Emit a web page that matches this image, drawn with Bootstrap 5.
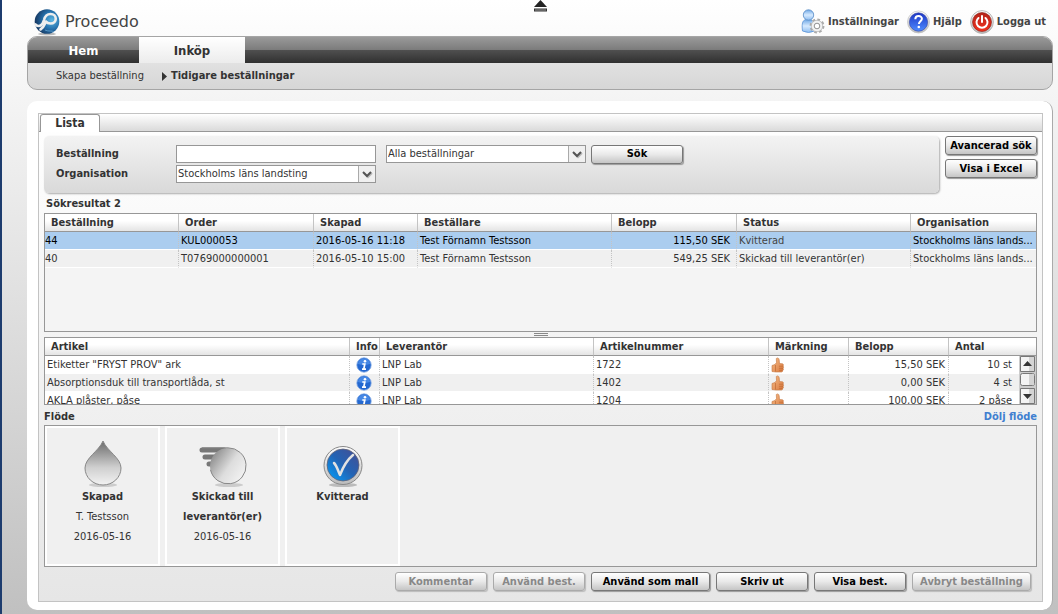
<!DOCTYPE html>
<html lang="sv">
<head>
<meta charset="utf-8">
<meta name="viewport" content="width=device-width, initial-scale=1">
<title>Proceedo – Tidigare beställningar</title>
<link href="https://cdn.jsdelivr.net/npm/bootstrap@5.3.0/dist/css/bootstrap.min.css" rel="stylesheet">
<style>
  body { font-family: "DejaVu Sans Condensed", "Noto Sans", sans-serif; font-size: 11px; line-height: 18px; color: #333; background: linear-gradient(#fff, #f4f4f4 100px, #c0c0c0) no-repeat #c0c0c0; min-height: 100vh; }
  b, th { font-weight: 700; }
  .app-shell { border-left: 2px solid #1d3c6e; padding: 0 5px 5px 25px; min-height: 100vh; }
  .top-line { height: 36px; padding: 7px 7px 0 6px; }
  .brand-word { font-family: "DejaVu Sans", sans-serif; font-size: 16px; color: #444; }
  .tool-link { color: #444; font-weight: 700; text-decoration: none; font-size: 11px; gap: 3px; }
  .eject { left: 50%; top: 0; margin-left: 3px; }
  .main-nav { border: 1px solid #a5a5a5; border-radius: 10px; overflow: hidden; background: linear-gradient(#ececec, #d6d6d6); height: 54px; }
  .nav-strip { height: 26px; background: linear-gradient(#9a9a9a, #7b7b7b 50%, #505050 50%, #303030); }
  .nav-strip a { width: 111px; font-size: 13px; font-weight: 700; color: #fff; text-decoration: none; line-height: 28px; text-align: center; }
  .nav-strip a.current { width: 106px; color: #333; background: linear-gradient(#fff, #ececec); }
  .sub-nav { height: 26px; line-height: 26px; padding-left: 28px; gap: 18px; }
  .sub-nav a { color: #333; text-decoration: none; }
  .sheet { margin-top: 11px; background: #fff; border-radius: 10px; border-right: 1px solid #aaa; padding: 12px 9px 8px 11px; }
  .frame { border: 1px solid #c3c3c3; background: linear-gradient(#fff, #e6e6e6); }
  .tab-strip { height: 18px; border-bottom: 1px solid #979797; background: linear-gradient(#fff, #dadada); }
  .tab-strip a { width: 60px; height: 18px; margin-left: 1px; border: 1px solid #979797; border-bottom: 0; border-radius: 3px 3px 0 0; background: #fff; text-align: center; font-size: 12px; font-weight: 700; color: #333; text-decoration: none; line-height: 17px; }
  .frame-body { padding: 4px 5px 10px 5px; }
  .search-panel { height: 57px; margin-right: 6px; padding: 9px 12px; gap: 2px; border-radius: 5px; background: linear-gradient(#f3f3f3, #d9d9d9); box-shadow: 1px 1px 2px #aaa; }
  .search-panel label { width: 120px; line-height: 18px; font-weight: 700; }
  .filter-row { height: 18px; }
  .scope-field { padding-left: 10px; padding-right: 5px; }
  .field { display: block; appearance: none; width: 200px; height: 18px; border: 1px solid #979797; border-radius: 0; background-color: #fff; padding: 0 1px; font-size: 11px; line-height: 16px; color: #333; }
  select.field { background: url("data:image/svg+xml,%3Csvg xmlns='http://www.w3.org/2000/svg' width='17' height='16'%3E%3Cpath d='M0 0h17v16H0z' fill='%23f0f0f0'/%3E%3Cpath d='M.5 0v16' stroke='%23aaa'/%3E%3Cpath d='M6 7l4 4 4-4' fill='none' stroke='%23bbb' stroke-width='2'/%3E%3Cpath d='M5 6l4 4 4-4' fill='none' stroke='%23555' stroke-width='2'/%3E%3C/svg%3E") right center no-repeat #fff; }
  .push { height: 19px; min-width: 92px; padding: 0 4px; border: 1px solid #777; border-radius: 3px; background: linear-gradient(#fff, #e9e9e9 50%, #c5c5c5); box-shadow: 1px 1px 1px #999; color: #000; font-size: 11px; font-weight: 700; line-height: 16px; white-space: nowrap; }
  .push:disabled { color: #888; border-color: #aaa; box-shadow: 1px 1px 1px #bbb; }
  .section-head { height: 20px; line-height: 22px; padding-left: 2px; }
  .flow-head { padding-left: 0; line-height: 24px; }
  .hide-flow { color: #3f7fd0; text-decoration: none; }
  .grid-box { border: 1px solid #979797; background: #f4f4f4; overflow: hidden; }
  .orders-box { height: 119px; }
  .lines-box { height: 68px; }
  .grid { width: 100%; table-layout: fixed; border-collapse: separate; border-spacing: 0; }
  .grid th { height: 18px; padding: 0 0 0 6px; line-height: 17px; background: linear-gradient(#fff 40%, #e4e4e4); border-bottom: 1px solid #979797; border-left: 1px solid #c4c4c4; white-space: nowrap; }
  .grid td { height: 18px; padding: 0 6px 0 2px; line-height: 17px; border-left: 1px dotted #c4c4c4; border-bottom: 1px solid #fff; white-space: nowrap; }
  .grid th:first-child, .grid td:first-child { border-left: 0; }
  .orders td:first-child { padding-left: 0; }
  .orders td { background: #f0f0f0; }
  .orders td:last-child { padding-right: 0; }
  .orders .picked td { background: #abcdef; color: #000; }
  .orders .picked td.faded { color: #444; }
  .lines tbody tr:nth-child(odd) td { background: #fff; }
  .lines tbody tr:nth-child(even) td { background: #f0f0f0; }
  .lines td:nth-child(6) { padding-right: 3px; }
  .lines td:last-child { padding-right: 24px; }
  .lines .icon-cell { padding: 0 0 0 6px; }
  .lines svg { display: block; }
  .splitter { height: 5px; }
  .splitter i { width: 14px; height: 3px; border-top: 1px solid #888; border-bottom: 1px solid #888; }
  .scroller { right: 0; top: 18px; width: 17px; height: 49px; }
  .flow-box { border: 1px solid #979797; background: #f0f0f0; height: 142px; gap: 5px; }
  .step { width: 115px; border: 2px solid #fff; padding-top: 10px; text-align: center; line-height: 20px; }
  .step svg { display: block; margin: 0 auto; }
  .foot-actions { margin: 5px 6px 0 0; gap: 6px; }
  .foot-actions .wide { width: 119px; }
</style>
</head>
<body>
<svg width="0" height="0" class="position-absolute" aria-hidden="true">
  <defs>
    <linearGradient id="grey" x1="0" y1="0" x2="0" y2="1"><stop offset="0" stop-color="#6b6b6b"/><stop offset=".6" stop-color="#cfcfcf"/><stop offset="1" stop-color="#f2f2f2"/></linearGradient>
    <linearGradient id="greyball" x1="0" y1="0" x2="1" y2=".7"><stop offset="0" stop-color="#777"/><stop offset=".6" stop-color="#ddd"/><stop offset="1" stop-color="#f2f2f2"/></linearGradient>
    <linearGradient id="bluetick" x1="1" y1="0" x2="0" y2="1"><stop offset="0" stop-color="#474d91"/><stop offset=".5" stop-color="#2363b4"/><stop offset="1" stop-color="#00a2ff"/></linearGradient>
    <radialGradient id="orb" cx=".7" cy=".45" r=".7"><stop offset="0" stop-color="#5db8e4"/><stop offset=".5" stop-color="#2672ad"/><stop offset="1" stop-color="#16365f"/></radialGradient>
    <linearGradient id="helpblue" x1="0" y1="0" x2="0" y2="1"><stop offset="0" stop-color="#1c35c4"/><stop offset="1" stop-color="#4d8bff"/></linearGradient>
    <linearGradient id="offred" x1="0" y1="0" x2="0" y2="1"><stop offset="0" stop-color="#b3241a"/><stop offset="1" stop-color="#f2301c"/></linearGradient>
    <linearGradient id="rim" x1="0" y1="0" x2="0" y2="1"><stop offset="0" stop-color="#fff"/><stop offset="1" stop-color="#bbb"/></linearGradient>
    <linearGradient id="person" x1="0" y1="0" x2="0" y2="1"><stop offset="0" stop-color="#6fa8e6"/><stop offset=".5" stop-color="#d6eaff"/><stop offset="1" stop-color="#8cbcf0"/></linearGradient>
    <linearGradient id="skin" x1="0" y1="0" x2="1" y2="1"><stop offset="0" stop-color="#f5bd8a"/><stop offset="1" stop-color="#d9783c"/></linearGradient>
    <symbol id="info" viewBox="0 0 16 16"><circle cx="8" cy="8" r="7.200" fill="#2468d0" stroke="#7fa8e4" stroke-width=".8"/><path d="M2 7a6 5.500 0 0 1 12 0Q8 9 2 7z" fill="#5596ee" opacity=".7"/><circle cx="9" cy="4.200" r="1.300" fill="#fff"/><path d="M6.300 7h2.500l-1 4.800M6 12.200h4" fill="none" stroke="#fff" stroke-width="1.700"/></symbol>
    <symbol id="thumb" viewBox="0 0 14 16"><path d="M1 8.500l3-1 1.500-2L5.300 1.500C6.500.3 8 1 8.200 3L8.500 6.500l3 .3c1.200.5 1.200 1.700.4 2.200.9.500.9 1.600.1 2.200.7.700.5 1.700-.2 2.100.1 1-.5 1.700-1.500 1.700H5l-4-.5z" fill="url(#skin)" stroke="#c4763f" stroke-width=".6"/><path d="M4.500 8v6.500M8 9.200h4M8 11.300h4M8 13.300h3.500" stroke="#b9622c" stroke-width=".6"/></symbol>
  </defs>
</svg>

<div class="app-shell position-relative">
  <svg class="eject position-absolute" width="15" height="12" viewBox="0 0 15 12"><path d="M7.500 0L14 7H1z" fill="#222"/><path d="M1 8.500h13v3H1z" fill="#333"/><path d="M2 10h11" stroke="#999"/></svg>

  <header class="top-line d-flex justify-content-between">
    <div class="d-flex align-items-center gap-1">
      <svg width="28" height="28" viewBox="0 0 28 28"><ellipse cx="14" cy="26" rx="9" ry="1.500" fill="#bbb"/><circle cx="14" cy="13.500" r="12.300" fill="url(#orb)"/><path d="M3 19c2-1 4-1 6-3M12 22c4 2 7 0 9 2" stroke="#5796c6" fill="none"/><path d="M2.500 16.500c4 3.500 7 .5 8.500-4.500C12 8 14 6 17.500 6c7 0 7 9.500 0 9.500-2.500 0-3.800-1-4.500-2M13 13.500c-1.500 3-2 6-5.500 8" fill="none" stroke="#eee" stroke-width="2.600" stroke-linecap="round"/></svg>
      <span class="brand-word">Proceedo</span>
    </div>
    <nav class="d-flex align-items-center gap-2">
      <a href="#" class="tool-link d-flex align-items-center"><svg width="24" height="25" viewBox="0 0 24 25"><path d="M1.500 22C0 10 4 10.500 7.500 10.500S14 12 13.500 22q-6 3-12 0z" fill="url(#person)" stroke="#5c93d6" stroke-width=".8"/><circle cx="7.500" cy="6" r="5.200" fill="url(#person)" stroke="#5489c4" stroke-width=".8"/><circle cx="16" cy="17" r="6.200" fill="#eee" stroke="#aaa" stroke-width="2.500" stroke-dasharray="2.600 2.200"/><circle cx="16" cy="17" r="5.700" fill="#f2f2f2" stroke="#aaa" stroke-width=".6"/><circle cx="16" cy="17" r="2.800" fill="#fff" stroke="#777" stroke-width=".8"/></svg>Inställningar</a>
      <a href="#" class="tool-link d-flex align-items-center"><svg width="23" height="24" viewBox="0 0 23 24"><circle cx="11.500" cy="12" r="11" fill="url(#rim)" stroke="#bbb" stroke-width=".6"/><circle cx="11.500" cy="12" r="9.200" fill="url(#helpblue)" stroke="#3947a0" stroke-width=".6"/><path d="M8.300 9.300c0-4.400 6.600-4.200 6.600-.5 0 2.400-3 2.600-3 5.200" fill="none" stroke="#fff" stroke-width="2"/><circle cx="11.800" cy="17" r="1.300" fill="#fff"/></svg>Hjälp</a>
      <a href="#" class="tool-link d-flex align-items-center"><svg width="24" height="24" viewBox="0 0 24 24"><circle cx="12" cy="12" r="11.400" fill="url(#rim)" stroke="#aaa" stroke-width=".8"/><circle cx="12" cy="12" r="9.500" fill="url(#offred)" stroke="#841b14" stroke-width=".6"/><path d="M8.500 8a5.500 5.500 0 1 0 7 0M12 6v6" fill="none" stroke="#fff" stroke-width="2" stroke-linecap="round"/></svg>Logga ut</a>
    </nav>
  </header>

  <nav class="main-nav">
    <div class="nav-strip d-flex"><a href="#">Hem</a><a href="#" class="current" aria-current="page">Inköp</a></div>
    <div class="sub-nav d-flex"><a href="#">Skapa beställning</a><a href="#" class="fw-bold d-flex align-items-center gap-1"><svg width="5" height="9" viewBox="0 0 5 9"><path d="M0 0l5 4.500L0 9z" fill="#333"/></svg>Tidigare beställningar</a></div>
  </nav>

  <main class="sheet">
    <div class="frame">
      <div class="tab-strip d-flex"><a href="#">Lista</a></div>
      <div class="frame-body">
        <div class="d-flex">
          <form class="search-panel flex-grow-1 d-flex flex-column">
            <div class="filter-row d-flex align-items-center">
              <label for="order">Beställning</label>
              <input id="order" type="text" class="field">
              <div class="scope-field"><select class="field" aria-label="Urval"><option>Alla beställningar</option></select></div>
              <button type="button" class="push">Sök</button>
            </div>
            <div class="filter-row d-flex align-items-center">
              <label for="org">Organisation</label>
              <select id="org" class="field"><option>Stockholms läns landsting</option></select>
            </div>
          </form>
          <div class="d-flex flex-column gap-1">
            <button type="button" class="push">Avancerad sök</button>
            <button type="button" class="push">Visa i Excel</button>
          </div>
        </div>

        <div class="section-head fw-bold">Sökresultat 2</div>
        <div class="grid-box orders-box">
          <table class="grid orders">
            <colgroup><col style="width:133px"><col style="width:135px"><col style="width:104px"><col style="width:194px"><col style="width:125px"><col style="width:174px"><col></colgroup>
            <thead><tr><th>Beställning</th><th>Order</th><th>Skapad</th><th>Beställare</th><th>Belopp</th><th>Status</th><th>Organisation</th></tr></thead>
            <tbody>
              <tr class="picked"><td>44</td><td>KUL000053</td><td>2016-05-16 11:18</td><td>Test Förnamn Testsson</td><td class="text-end">115,50 SEK</td><td class="faded">Kvitterad</td><td>Stockholms läns lands...</td></tr>
              <tr><td>40</td><td>T0769000000001</td><td>2016-05-10 15:00</td><td>Test Förnamn Testsson</td><td class="text-end">549,25 SEK</td><td>Skickad till leverantör(er)</td><td>Stockholms läns lands...</td></tr>
            </tbody>
          </table>
        </div>

        <div class="splitter d-flex justify-content-center align-items-center"><i></i></div>

        <div class="grid-box lines-box position-relative">
          <table class="grid lines">
            <colgroup><col><col style="width:30px"><col style="width:214px"><col style="width:175px"><col style="width:80px"><col style="width:100px"><col style="width:88px"></colgroup>
            <thead><tr><th>Artikel</th><th>Info</th><th>Leverantör</th><th>Artikelnummer</th><th>Märkning</th><th>Belopp</th><th>Antal</th></tr></thead>
            <tbody>
              <tr><td>Etiketter "FRYST PROV" ark</td><td class="icon-cell"><svg width="16" height="16"><use href="#info"/></svg></td><td>LNP Lab</td><td>1722</td><td><svg width="14" height="16"><use href="#thumb"/></svg></td><td class="text-end">15,50 SEK</td><td class="text-end">10 st</td></tr>
              <tr><td>Absorptionsduk till transportlåda, st</td><td class="icon-cell"><svg width="16" height="16"><use href="#info"/></svg></td><td>LNP Lab</td><td>1402</td><td><svg width="14" height="16"><use href="#thumb"/></svg></td><td class="text-end">0,00 SEK</td><td class="text-end">4 st</td></tr>
              <tr><td>AKLA plåster, påse</td><td class="icon-cell"><svg width="16" height="16"><use href="#info"/></svg></td><td>LNP Lab</td><td>1204</td><td><svg width="14" height="16"><use href="#thumb"/></svg></td><td class="text-end">100,00 SEK</td><td class="text-end">2 påse</td></tr>
            </tbody>
          </table>
          <svg class="scroller position-absolute" viewBox="0 0 17 49"><path d="M0 0h17v49H0z" fill="#ccc"/><g fill="#f3f3f3" stroke="#777"><path d="M1.500.5h14v15h-14z"/><rect x="1.500" y="17.500" width="14" height="12" rx="2"/><path d="M1.500 32.500h14v15h-14z"/></g><path d="M10 18h5v11h-5zM10 1h5v14h-5zM10 33h5v14h-5z" fill="#d4d4d4"/><path d="M4 10l4.500-5 4.500 5zM4 38l4.500 5 4.500-5z" fill="#333"/></svg>
        </div>

        <div class="section-head flow-head d-flex justify-content-between fw-bold"><span>Flöde</span><a href="#" class="hide-flow">Dölj flöde</a></div>
        <div class="flow-box d-flex">
          <div class="step"><svg width="42" height="49" viewBox="0 0 42 49"><ellipse cx="21" cy="47" rx="14" ry="2" fill="#ccc"/><path d="M21 3c4 10 18 17 18 27a18 17 0 0 1-36 0C3 20 17 13 21 3z" fill="url(#grey)" stroke="#888"/></svg><b>Skapad</b><br>T. Testsson<br>2016-05-16</div>
          <div class="step"><svg width="50" height="49" viewBox="0 0 50 49"><ellipse cx="31" cy="47" rx="14" ry="2" fill="#ccc"/><path d="M4 12h22M7 19h15M11 26h8" stroke="#777" stroke-width="5" stroke-linecap="round"/><circle cx="30" cy="28" r="18" fill="url(#greyball)"/><path d="M4 9.800h26a18 18 0 1 1-17.500 22" fill="none" stroke="#888"/></svg><b>Skickad till<br>leverantör(er)</b><br>2016-05-16</div>
          <div class="step"><svg width="42" height="49" viewBox="0 0 42 49"><ellipse cx="21" cy="47" rx="14" ry="2" fill="#bbb"/><circle cx="21" cy="27.500" r="19" fill="url(#rim)" stroke="#888"/><circle cx="21" cy="27" r="16" fill="url(#bluetick)" stroke="#667" stroke-width=".8"/><path d="M12 25c3 3 4 8 6 12 3-8 7-15 13-20" fill="none" stroke="#e2e2e2" stroke-width="2.500" stroke-linecap="round" stroke-linejoin="round"/></svg><b>Kvitterad</b></div>
        </div>

        <div class="foot-actions d-flex justify-content-end">
          <button type="button" class="push" disabled>Kommentar</button>
          <button type="button" class="push" disabled>Använd best.</button>
          <button type="button" class="push wide">Använd som mall</button>
          <button type="button" class="push">Skriv ut</button>
          <button type="button" class="push">Visa best.</button>
          <button type="button" class="push wide" disabled>Avbryt beställning</button>
        </div>
      </div>
    </div>
  </main>
</div>
<script src="https://cdn.jsdelivr.net/npm/bootstrap@5.3.0/dist/js/bootstrap.bundle.min.js"></script>
</body>
</html>
